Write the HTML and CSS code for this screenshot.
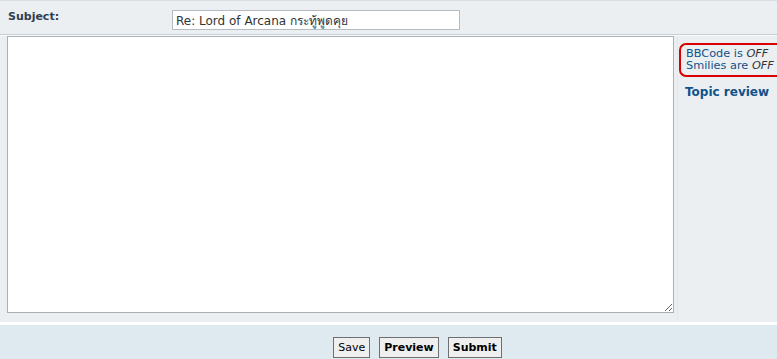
FILE: index.html
```html
<!DOCTYPE html>
<html lang="en">
<head>
<meta charset="UTF-8">
<title>Post a reply</title>
<link rel="stylesheet" href="styles.css">
</head>
<body>

<div class="subject-row">
    <label class="label" for="subject">Subject:</label>
    <input type="text" id="subject" class="subject-input" value="Re: Lord of Arcana กระทู้พูดคุย">
</div>

<div class="message-row">
    <div class="message-cell">
        <textarea class="message"></textarea>
    </div>
    <div class="side-cell">
        <div class="status-box">
            BBCode is <em>OFF</em><br>
            Smilies are <em>OFF</em>
        </div>
        <a class="topic-review" href="#">Topic review</a>
    </div>
</div>

<div class="button-row">
    <button class="btn">Save</button>
    <button class="btn btn-main">Preview</button>
    <button class="btn btn-main">Submit</button>
</div>

</body>
</html>
```

FILE: styles.css
```css
body {
    margin: 0;
    background-color: #ebeff2;
    color: #323d4f;
    font-family: "DejaVu Sans", Verdana, sans-serif;
    font-size: 11px;
    overflow: hidden;
}
.subject-row {
    display: flex;
    align-items: flex-start;
    height: 33px;
    border-top: 1px solid #d7dde2;
    border-bottom: 1px solid #c8d0d6;
}
.label {
    width: 164px;
    padding: 9px 0 0 8px;
    font-weight: bold;
    font-size: 11px;
}
.subject-input {
    margin-top: 9px;
    width: 288px;
    height: 20px;
    box-sizing: border-box;
    padding: 1px 3px;
    border: 1px solid #b4bcc2;
    background-color: #fff;
    color: #333;
    font-family: "DejaVu Sans", "Noto Sans", sans-serif;
    font-size: 12px;
}
.message-row {
    display: flex;
    height: 286px;
    border-top: 1px solid #f7f9fa;
    border-bottom: 3px solid #fff;
}
.message-cell {
    padding: 0 3px 0 7px;
}
.message {
    display: block;
    width: 667px;
    height: 277px;
    box-sizing: border-box;
    margin: 0;
    border: 1px solid #a9b0b6;
    background-color: #fff;
    resize: both;
}
.side-cell {
    flex: 1;
    min-width: 0;
    padding-top: 7px;
    border-left: 1px solid #e4e8eb;
    font-size: 12px;
}
.status-box {
    margin-left: 1px;
    padding: 3px 0 3px 5px;
    border: 2px solid #d80000;
    border-right: none;
    border-radius: 7px 0 0 7px;
    color: #105289;
    font-size: 11.3px;
    line-height: 12px;
    white-space: nowrap;
}
.status-box em {
    color: #333;
}
.topic-review {
    display: block;
    margin: 8px 0 0 7px;
    color: #105289;
    font-weight: bold;
    text-decoration: none;
    white-space: nowrap;
}
.button-row {
    display: flex;
    justify-content: center;
    gap: 9px;
    padding: 12px 0 0 58px;
    height: 30px;
    background-color: #dfe9f0;
}
.btn {
    height: 21px;
    padding: 0 4px;
    border: 1px solid #6f6f6f;
    background-color: #efefef;
    color: #000;
    font-family: "DejaVu Sans", Verdana, sans-serif;
    font-size: 11px;
}
.btn-main {
    font-weight: bold;
}
```
